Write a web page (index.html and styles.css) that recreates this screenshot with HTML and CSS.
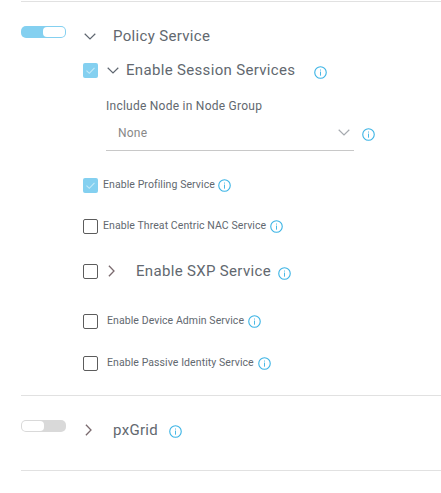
FILE: index.html
```html
<!DOCTYPE html>
<html lang="en">
<head>
<meta charset="utf-8">
<title>Node services</title>
<link rel="stylesheet" href="styles.css">
</head>
<body>
<svg class="defs" width="0" height="0" aria-hidden="true">
  <symbol id="info" viewBox="0 0 14 14">
    <circle cx="7" cy="7" r="6.2" fill="none" stroke="#3cb4e5" stroke-width="1.2"/>
    <rect x="6.5" y="6" width="1" height="4.4" fill="#3cb4e5"/>
    <rect x="6.5" y="3.8" width="1" height="1.1" fill="#3cb4e5"/>
  </symbol>
  <symbol id="down" viewBox="0 0 12 7">
    <path d="M.7.8 6 6 11.300.8" fill="none" stroke="#5f6670" stroke-width="1.2"/>
  </symbol>
  <symbol id="right" viewBox="0 0 7 12">
    <path d="M.9.7 6 6 .9 11.300" fill="none" stroke="#7a6a6e" stroke-width="1.3"/>
  </symbol>
  <symbol id="tick" viewBox="0 0 15 15">
    <path d="M3.500 7.600 6.300 10.300 11.500 4.800" fill="none" stroke="#c4e9f8" stroke-width="1.100"/>
  </symbol>
</svg>
<main class="page">
  <section class="panel panel-policy">
    <div class="toggle toggle-on"><span class="knob"></span></div>
    <div class="body">
      <div class="row row-title">
        <svg class="chev-down"><use href="#down"/></svg>
        <span class="title">Policy Service</span>
      </div>
      <div class="row row-session">
        <span class="check check-on"><svg class="tick"><use href="#tick"/></svg></span>
        <svg class="chev-down chev-session"><use href="#down"/></svg>
        <span class="title">Enable Session Services</span>
        <svg class="info info-session"><use href="#info"/></svg>
      </div>
      <div class="group">
        <label class="field-label">Include Node in Node Group</label>
        <div class="select-row">
          <div class="select">
            <span>None</span>
            <svg class="chev-select"><use href="#down"/></svg>
          </div>
          <svg class="info info-select"><use href="#info"/></svg>
        </div>
      </div>
      <div class="row row-small row-profiling">
        <span class="check check-on"><svg class="tick"><use href="#tick"/></svg></span>
        <span class="small">Enable Profiling Service</span>
        <svg class="info info-profiling"><use href="#info"/></svg>
      </div>
      <div class="row row-small row-threat">
        <span class="check"></span>
        <span class="small">Enable Threat Centric NAC Service</span>
        <svg class="info"><use href="#info"/></svg>
      </div>
      <div class="row row-sxp">
        <span class="check"></span>
        <svg class="chev-right"><use href="#right"/></svg>
        <span class="title">Enable SXP Service</span>
        <svg class="info info-sxp"><use href="#info"/></svg>
      </div>
      <div class="row row-small row-device">
        <span class="check"></span>
        <span class="small small-wide">Enable Device Admin Service</span>
        <svg class="info"><use href="#info"/></svg>
      </div>
      <div class="row row-small row-passive">
        <span class="check"></span>
        <span class="small small-wide">Enable Passive Identity Service</span>
        <svg class="info"><use href="#info"/></svg>
      </div>
    </div>
  </section>
  <section class="panel panel-grid">
    <div class="toggle"><span class="knob"></span></div>
    <div class="body">
      <div class="row row-title">
        <svg class="chev-right chev-grid"><use href="#right"/></svg>
        <span class="title">pxGrid</span>
        <svg class="info info-grid"><use href="#info"/></svg>
      </div>
    </div>
  </section>
</main>
</body>
</html>
```
FILE: styles.css
```css
* { box-sizing: border-box; }
html, body { margin: 0; background: #fff; }
body { font-family: Roboto, "Liberation Sans", sans-serif; color: #62686f; height: 493px; overflow: hidden; }
.defs { position: absolute; }
.page { padding: 1px 0 0 21px; }
.panel { display: flex; border-top: 1px solid #e1e1e1; }
.panel-policy { height: 394px; padding-top: 24px; }
.panel-grid { height: 76px; padding-top: 24px; border-bottom: 1px solid #e1e1e1; }
.toggle { flex: none; width: 45px; height: 12px; border-radius: 5px; background: #d9d9d9; padding: 1px; display: flex; }
.toggle-on { background: #84d0f0; justify-content: flex-end; }
.knob { width: 22px; height: 10px; border-radius: 4px; background: #fff; }
.body { flex: 1; padding-left: 17px; min-width: 0; }
.row { display: flex; align-items: center; }
.row-title { height: 20px; }
.title { font-size: 15px; line-height: 20px; letter-spacing: .33px; white-space: nowrap; }
.chev-down { width: 12px; height: 7px; flex: none; margin: 0 17px 0 1px; }
.chev-session { margin: 0 7px 0 9px; }
.chev-right { width: 7px; height: 12px; flex: none; margin: 0 21px 0 10px; }
.chev-grid { margin: 0 21px 0 2px; }
.check { flex: none; width: 15px; height: 15px; border: 1.3px solid #5c5c5c; border-radius: 2px; background: #fff; display: block; }
.check-on { border: 0; background: #84d0f0; }
.tick { width: 15px; height: 15px; display: block; }
.info { flex: none; width: 13px; height: 13px; margin-left: 4px; }
.info-profiling { margin-left: 3px; }
.row-session { height: 20px; margin-top: 14px; }
.info-session { margin: 4px 0 0 19px; }
.group { padding-left: 23px; margin-top: 19px; }
.field-label { display: block; font-size: 12px; line-height: 14px; font-weight: 400; letter-spacing: .25px; }
.select-row { display: flex; align-items: center; margin-top: 5px; }
.select { width: 248px; height: 33px; border-bottom: 1px solid #c8c8c8; padding: 0 4px 3px 12px; display: flex; align-items: center; justify-content: space-between; font-size: 12px; letter-spacing: .2px; color: #888; }
.chev-select { width: 12px; height: 7px; opacity: .55; }
.info-select { margin-left: 8px; }
.row-small { height: 16px; }
.small { font-size: 10.500px; line-height: 16px; margin-left: 5px; letter-spacing: .08px; white-space: nowrap; }
.small-wide { margin-left: 9px; }
.row-profiling { margin-top: 26px; }
.row-threat { margin-top: 25px; }
.row-sxp { height: 20px; margin-top: 27px; }
.info-sxp { margin: 4px 0 0 7px; }
.row-device { margin-top: 32px; }
.row-passive { margin-top: 26px; }
.info-grid { margin: 3px 0 0 11px; }
```
